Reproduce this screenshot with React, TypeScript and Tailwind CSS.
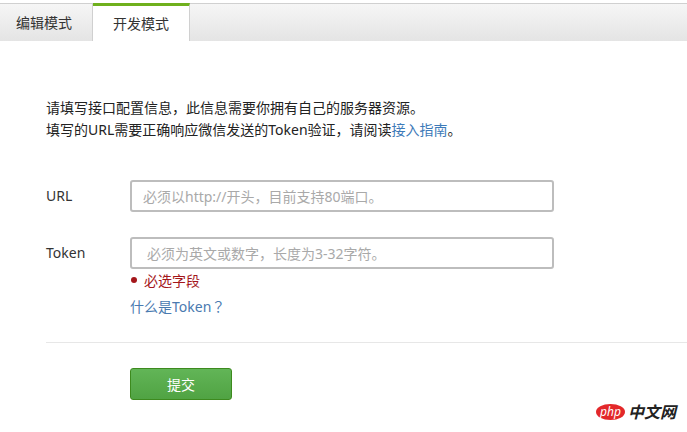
const App = () => {
  return (
    <div className="relative w-[687px] h-[432px] overflow-hidden bg-white text-[14px] text-[#222] font-['Noto_Sans','Noto_Sans_CJK_SC',sans-serif]">
      {/* tabs */}
      <div className="h-[41px] pt-[3px] border-b border-[#d4d4d4]">
        <div className="flex h-[38px] border-t border-[#d0d0d0] bg-gradient-to-b from-[#f6f6f6] to-[#e4e4e4]">
          <div className="w-[93px] pr-[4px] flex items-center justify-center border-r border-[#d0d0d0] text-[#333]">编辑模式</div>
          <div className="relative w-[97px] h-[38px] -mt-px flex items-center justify-center pb-[1px] bg-white border-t-[3px] border-t-[#6fb01d] border-r border-r-[#d0d0d0] text-[#333]">开发模式</div>
        </div>
      </div>

      <div className="pl-[46px] pt-[56px]">
        <p className="leading-[22px]">请填写接口配置信息，此信息需要你拥有自己的服务器资源。</p>
        <p className="leading-[22px]">
          填写的URL需要正确响应微信发送的Token验证，请阅读<span className="text-[#3d7ab8]">接入指南</span>。
        </p>

        <div className="mt-[39px] flex items-center h-[32px]">
          <label className="w-[84px] pb-[2px] text-[#333]">URL</label>
          <input
            className="w-[424px] h-[32px] px-[11px] border-2 border-[#bdbdbd] rounded-[3px] outline-none text-[14px] placeholder:text-[#a9a9a9]"
            placeholder="必须以http://开头，目前支持80端口。"
          />
        </div>

        <div className="mt-[25px] flex items-center h-[32px]">
          <label className="w-[84px] pb-[2px] text-[#333]">Token</label>
          <input
            className="w-[424px] h-[32px] px-[15px] border-2 border-[#bdbdbd] rounded-[3px] outline-none text-[14px] placeholder:text-[#a9a9a9]"
            placeholder="必须为英文或数字，长度为3-32字符。"
          />
        </div>

        <div className="ml-[84px] flex items-center h-[22px] text-[#a4161b]">
          <span className="w-[6px] h-[6px] ml-[1px] rounded-full bg-[#a4161b]" />
          <span className="ml-[7px]">必选字段</span>
        </div>
        <div className="ml-[84px] mt-[4px] leading-[22px] text-[#4a7ab0]">
          什么是Token<span className="font-['Noto_Sans_CJK_TC']">？</span>
        </div>

        <div className="mt-[24px] h-px bg-[#e7e7e7]" />

        <button className="ml-[84px] mt-[25px] block w-[102px] h-[32px] rounded-[3px] border border-[#3d8a1e] bg-gradient-to-b from-[#62b557] to-[#50a343] text-white text-[14px]">
          提交
        </button>
      </div>

      {/* watermark */}
      <div className="absolute left-[596px] top-[404px] flex items-center">
        <span className="w-[29px] h-[16px] rounded-[50%] bg-[#e3282a] flex items-center justify-center text-white text-[12px] italic leading-none">php</span>
        <span className="ml-[3px] text-[16px] leading-none font-bold italic text-[#222]">中文网</span>
      </div>
    </div>
  )
}

export default App
